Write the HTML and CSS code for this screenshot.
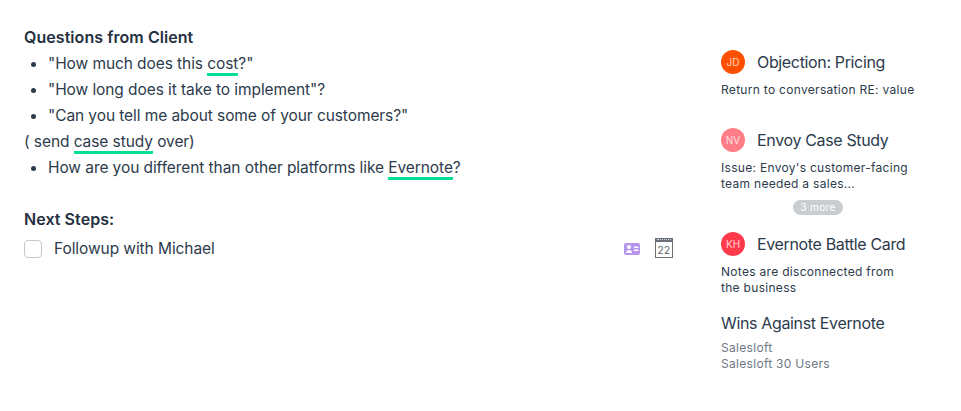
FILE: index.html
```html
<!DOCTYPE html>
<html lang="en">
<head>
  <meta charset="UTF-8">
  <title>Call Notes</title>
  <link rel="stylesheet" href="styles.css">
</head>
<body>
  <div class="page">
    <main class="notes">
      <h2 class="notes-title">Questions from Client</h2>
      <ul class="note-list">
        <li>"How much does this <span class="mark">cost</span>?"</li>
        <li>"How long does it take to implement"?</li>
        <li>"Can you tell me about some of your customers?"</li>
      </ul>
      <p class="note-line">( send <span class="mark">case study</span> over)</p>
      <ul class="note-list">
        <li>How are you different than other platforms like <span class="mark">Evernote</span>?</li>
      </ul>
      <h2 class="notes-title next-steps">Next Steps:</h2>
      <div class="task">
        <span class="checkbox"></span>
        <span class="task-label">Followup with Michael</span>
        <svg class="contact-icon" width="16" height="12" viewBox="0 0 16 12">
          <rect width="16" height="12" rx="2" fill="#b794ec"/>
          <circle cx="5" cy="4" r="2" fill="#fff"/>
          <path d="M2 10c0-2 1.2-3 3-3s3 1 3 3z" fill="#fff"/>
          <rect x="10" y="3.5" width="4.5" height="1.5" fill="#fff"/>
          <rect x="10" y="6.5" width="4.5" height="1.5" fill="#fff"/>
        </svg>
        <span class="date-icon">22</span>
      </div>
    </main>
    <aside class="side">
      <section class="card card-pricing">
        <div class="card-head">
          <span class="avatar avatar-jd">JD</span>
          <h3>Objection: Pricing</h3>
        </div>
        <p>Return to conversation RE: value</p>
      </section>
      <section class="card card-envoy">
        <div class="card-head">
          <span class="avatar avatar-nv">NV</span>
          <h3>Envoy Case Study</h3>
        </div>
        <p>Issue: Envoy's customer-facing<br>team needed a sales...</p>
        <div class="more-row"><span class="more">3 more</span></div>
      </section>
      <section class="card card-battle">
        <div class="card-head">
          <span class="avatar avatar-kh">KH</span>
          <h3>Evernote Battle Card</h3>
        </div>
        <p>Notes are disconnected from<br>the business</p>
      </section>
      <section class="wins">
        <h3>Wins Against Evernote</h3>
        <p>Salesloft<br>Salesloft 30 Users</p>
      </section>
    </aside>
  </div>
</body>
</html>
```

FILE: styles.css
```css
* { box-sizing: border-box; }
body {
  margin: 0;
  background: #fff;
  color: #2d3b4c;
  font-family: Inter, "Noto Sans", sans-serif;
}
h2, h3, p, ul {
  margin: 0;
  padding: 0;
}
.page {
  display: flex;
  width: 961px;
  height: 411px;
  padding: 26px 0 0 24px;
}

/* Notes column */
.notes {
  width: 650px;
  font-size: 15.5px;
  line-height: 26px;
  letter-spacing: -0.08px;
}
.notes-title {
  font-size: 16px;
  font-weight: 600;
  line-height: 22px;
  letter-spacing: 0.06px;
  color: #25303f;
}
.note-list {
  list-style: none;
}
.note-list li {
  position: relative;
  padding-left: 24px;
}
.note-list li::before {
  content: "";
  position: absolute;
  left: 7px;
  top: 11px;
  width: 5px;
  height: 5px;
  border-radius: 50%;
  background: #2d3b4c;
}
.note-list:first-of-type {
  margin-top: 3px;
}
.mark {
  display: inline-block;
  line-height: 22px;
  border-bottom: 3px solid #00dd99;
  border-radius: 1px;
  height: 23px;
}
.next-steps {
  margin-top: 27px;
}
.task {
  display: flex;
  align-items: center;
  height: 26px;
  margin-top: 6px;
}
.checkbox {
  width: 18px;
  height: 18px;
  border: 1px solid #c4c8cc;
  border-radius: 4px;
}
.task-label {
  margin-left: 12px;
  flex: 1;
}
.contact-icon {
  margin-right: 15px;
}
.date-icon {
  position: relative;
  width: 18px;
  height: 20px;
  margin: -2px 1px 0 0;
  border: 1.5px solid #6b7178;
  border-top-width: 4px;
  font-size: 10px;
  line-height: 16px;
  letter-spacing: 0.3px;
  text-align: center;
  color: #5d646c;
}
.date-icon::before {
  content: "";
  position: absolute;
  left: 1px;
  right: 1px;
  top: -3px;
  border-top: 1px dotted #d5d8da;
}

/* Side column */
.side {
  margin-left: 47px;
  width: 220px;
  padding-top: 24px;
}
.card-head {
  display: flex;
  align-items: center;
  gap: 12px;
}
.card h3, .wins h3 {
  font-size: 16px;
  font-weight: 400;
  line-height: 24px;
  letter-spacing: -0.35px;
}
.card p, .wins p {
  font-size: 12px;
  line-height: 16px;
  letter-spacing: 0.3px;
}
.card p {
  margin-top: 8px;
}
.avatar {
  width: 24px;
  height: 24px;
  border-radius: 50%;
  font-size: 10px;
  line-height: 24px;
  text-align: center;
  color: rgba(255, 255, 255, 0.75);
}
.avatar-jd { background: #ff4f00; }
.avatar-nv { background: #ff7d86; }
.avatar-kh { background: #ff3a4a; }
.card-pricing { height: 78px; }
.card-envoy { height: 104px; }
.more-row {
  display: flex;
  justify-content: center;
  width: 194px;
  margin-top: 8px;
}
.more {
  width: 50px;
  height: 15px;
  border-radius: 8px;
  background: #c9cdcf;
  color: #fff;
  font-size: 10px;
  line-height: 15px;
  letter-spacing: 0.4px;
  text-align: center;
}
.wins {
  margin-top: 15px;
}
.wins p {
  margin-top: 5px;
  color: #6d7783;
}
```
